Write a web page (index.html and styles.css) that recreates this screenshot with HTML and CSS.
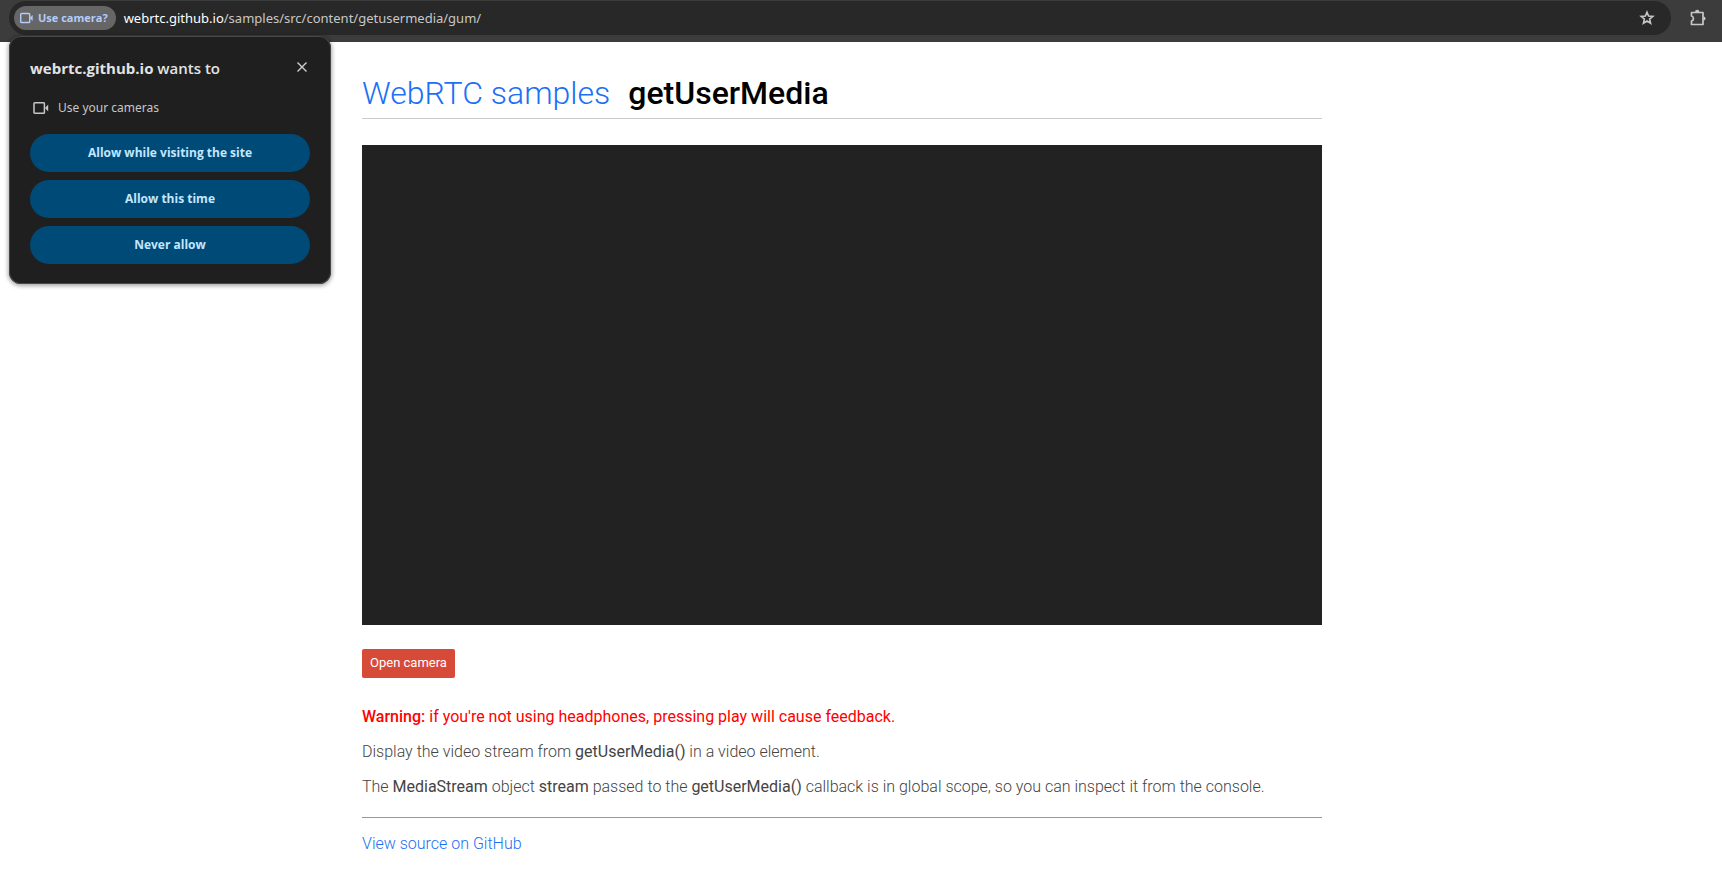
FILE: index.html
```html
<!DOCTYPE html>
<html lang="en">
<head>
<meta charset="utf-8">
<title>getUserMedia</title>
<link rel="stylesheet" href="styles.css">
</head>
<body>
<header class="toolbar">
  <div class="omnibox">
    <button class="chip" type="button">
      <svg class="chip-icon" viewBox="0 0 16 12" aria-hidden="true"><rect x="1.700" y="1.500" width="9" height="9" rx="0.800" fill="none" stroke="currentColor" stroke-width="1.400"/><path d="M10.800 6 13.600 3v6z" fill="currentColor"/></svg>
      Use camera?
    </button>
    <div class="url"><span class="host">webrtc.github.io</span>/samples/src/content/getusermedia/gum/</div>
    <button class="icon-button" type="button" aria-label="Bookmark this tab">
      <svg class="star" viewBox="0 0 16 16" aria-hidden="true"><path d="M8 2.200 9.600 6.100l4.200.300-3.200 2.700 1 4.100L8 11l-3.600 2.200 1-4.100-3.200-2.700 4.200-.300z" fill="none" stroke="currentColor" stroke-width="1.600"/></svg>
    </button>
  </div>
  <button class="icon-button" type="button" aria-label="Extensions">
    <svg class="puzzle" viewBox="0 0 18 18" aria-hidden="true"><path d="M2.500 3.500h11.500v12H2.500v-3.500c2.600-.600 2.600-4.400 0-5z" fill="none" stroke="currentColor" stroke-width="1.700" stroke-linejoin="round"/><path d="M6 3.200a2.200 2.400 0 0 1 4.400 0zM14.300 7.400a2.300 2.100 0 0 1 0 4.200z" fill="currentColor"/></svg>
  </button>
  <section class="prompt" role="dialog" aria-labelledby="prompt-title">
    <div class="prompt-head">
      <h2 class="prompt-title" id="prompt-title"><b>webrtc.github.io</b> wants to</h2>
      <button class="close" type="button" aria-label="Close">
        <svg viewBox="0 0 12 12" width="12" height="12" aria-hidden="true"><path d="M1.500 1.500l9 9M10.500 1.500l-9 9" stroke="currentColor" stroke-width="1.400"/></svg>
      </button>
    </div>
    <p class="permission">
      <svg viewBox="0 0 16 14" width="16" height="14" aria-hidden="true"><rect x="1" y="1.800" width="10.400" height="10.400" rx="0.800" fill="none" stroke="currentColor" stroke-width="1.500"/><path d="M12 7l3.200-3.500v7z" fill="currentColor"/></svg>
      Use your cameras
    </p>
    <div class="choices">
      <button class="choice" type="button">Allow while visiting the site</button>
      <button class="choice" type="button">Allow this time</button>
      <button class="choice" type="button">Never allow</button>
    </div>
  </section>
</header>
<div class="page">
  <main class="container">
    <h1 class="title"><a class="link" href="#samples">WebRTC samples</a><span class="name">getUserMedia</span></h1>
    <video class="video" playsinline></video>
    <button class="open" type="button">Open camera</button>
    <p class="warning"><strong>Warning:</strong> if you're not using headphones, pressing play will cause feedback.</p>
    <p class="text">Display the video stream from <code>getUserMedia()</code> in a video element.</p>
    <p class="text">The <code>MediaStream</code> object <code>stream</code> passed to the <code>getUserMedia()</code> callback is in global scope, so you can inspect it from the console.</p>
    <footer class="source"><a class="link" href="#source">View source on GitHub</a></footer>
  </main>
</div>
</body>
</html>
```

FILE: styles.css
```css
* { box-sizing: border-box; }

body {
  margin: 0;
  background: #fff;
  color: #444;
  font: 300 16px/24px Roboto, sans-serif;
}

button { border: 0; margin: 0; padding: 0; cursor: pointer; }

/* Browser bar */
.toolbar {
  position: relative;
  display: flex;
  align-items: flex-start;
  gap: 18px;
  height: 42px;
  padding: 1px 15px 0 9px;
  background: #3c3c3c;
  font: 400 13px/18px "Noto Sans", sans-serif;
}

.omnibox {
  flex: 1;
  display: flex;
  align-items: center;
  height: 34px;
  padding: 0 16px 0 5px;
  border-radius: 17px;
  background: #282828;
  color: #c7c7c7;
}

.chip {
  display: flex;
  align-items: center;
  gap: 3px;
  height: 24px;
  padding: 0 8px 0 5px;
  border-radius: 12px;
  background: #666;
  color: #b4ccfa;
  font: 700 11px/18px "Open Sans", sans-serif;
}

.chip-icon { width: 16px; height: 12px; }

.url { flex: 1; padding-left: 8px; }
.host { color: #fff; }

.icon-button {
  display: flex;
  align-items: center;
  height: 34px;
  background: none;
  color: #c7c7c7;
}

.star { width: 16px; height: 16px; }
.puzzle { width: 18px; height: 18px; }

/* Permission prompt */
.prompt {
  position: absolute;
  top: 36px;
  left: 9px;
  width: 322px;
  padding: 20px 21px;
  border-radius: 12px;
  background: #1f1f1f;
  color: #e3e3e3;
  box-shadow: inset 0 0 0 1px #484848, 0 1px 4px 1px rgba(0, 0, 0, 0.35);
}

.prompt-head {
  display: flex;
  justify-content: space-between;
  align-items: flex-start;
}

.prompt-title { margin: 0; font: 600 15px/24px "Open Sans", sans-serif; }
.prompt-title b { font-weight: 700; }

.close { display: flex; padding: 5px 2px; background: none; color: #d0d0d0; }

.permission {
  display: flex;
  align-items: center;
  gap: 9px;
  margin: 18px 0 16px;
  padding-left: 3px;
  line-height: 20px;
  font-size: 12px;
  color: #c7c7c7;
}

.choices { display: grid; gap: 8px; }

.choice {
  height: 38px;
  border-radius: 19px;
  background: #004a77;
  color: #c2e7ff;
  font: 700 12px/18px "Open Sans", sans-serif;
}

/* Sample page */
.page { padding: 32px 38px 0 0; }

.container { max-width: 960px; margin: 0 auto; }

.link { color: #1b70f5; text-decoration: none; }

.title {
  display: flex;
  gap: 18px;
  margin: 0 0 26px;
  padding-bottom: 6px;
  border-bottom: 1px solid #ccc;
  color: #000;
  font-size: 32px;
  font-weight: 300;
  line-height: 38px;
}

.name { font-weight: 500; }

.video {
  display: block;
  width: 100%;
  aspect-ratio: 2 / 1;
  background: #222;
}

.open {
  display: block;
  height: 29px;
  margin: 24px 0 27px;
  padding: 0 8px 2px;
  border-radius: 2px;
  background: #d84a38;
  color: #fff;
  font: 400 13px/18px Roboto, sans-serif;
}

.text, .warning { margin: 0 0 11px; }
.warning { color: #f00; font-weight: 400; }
.warning strong { font-weight: 500; }
.text code { font-family: Roboto, sans-serif; font-size: 16px; font-weight: 400; }

.source {
  margin-top: 18px;
  padding-top: 14px;
  border-top: 1px solid #999;
}
```
